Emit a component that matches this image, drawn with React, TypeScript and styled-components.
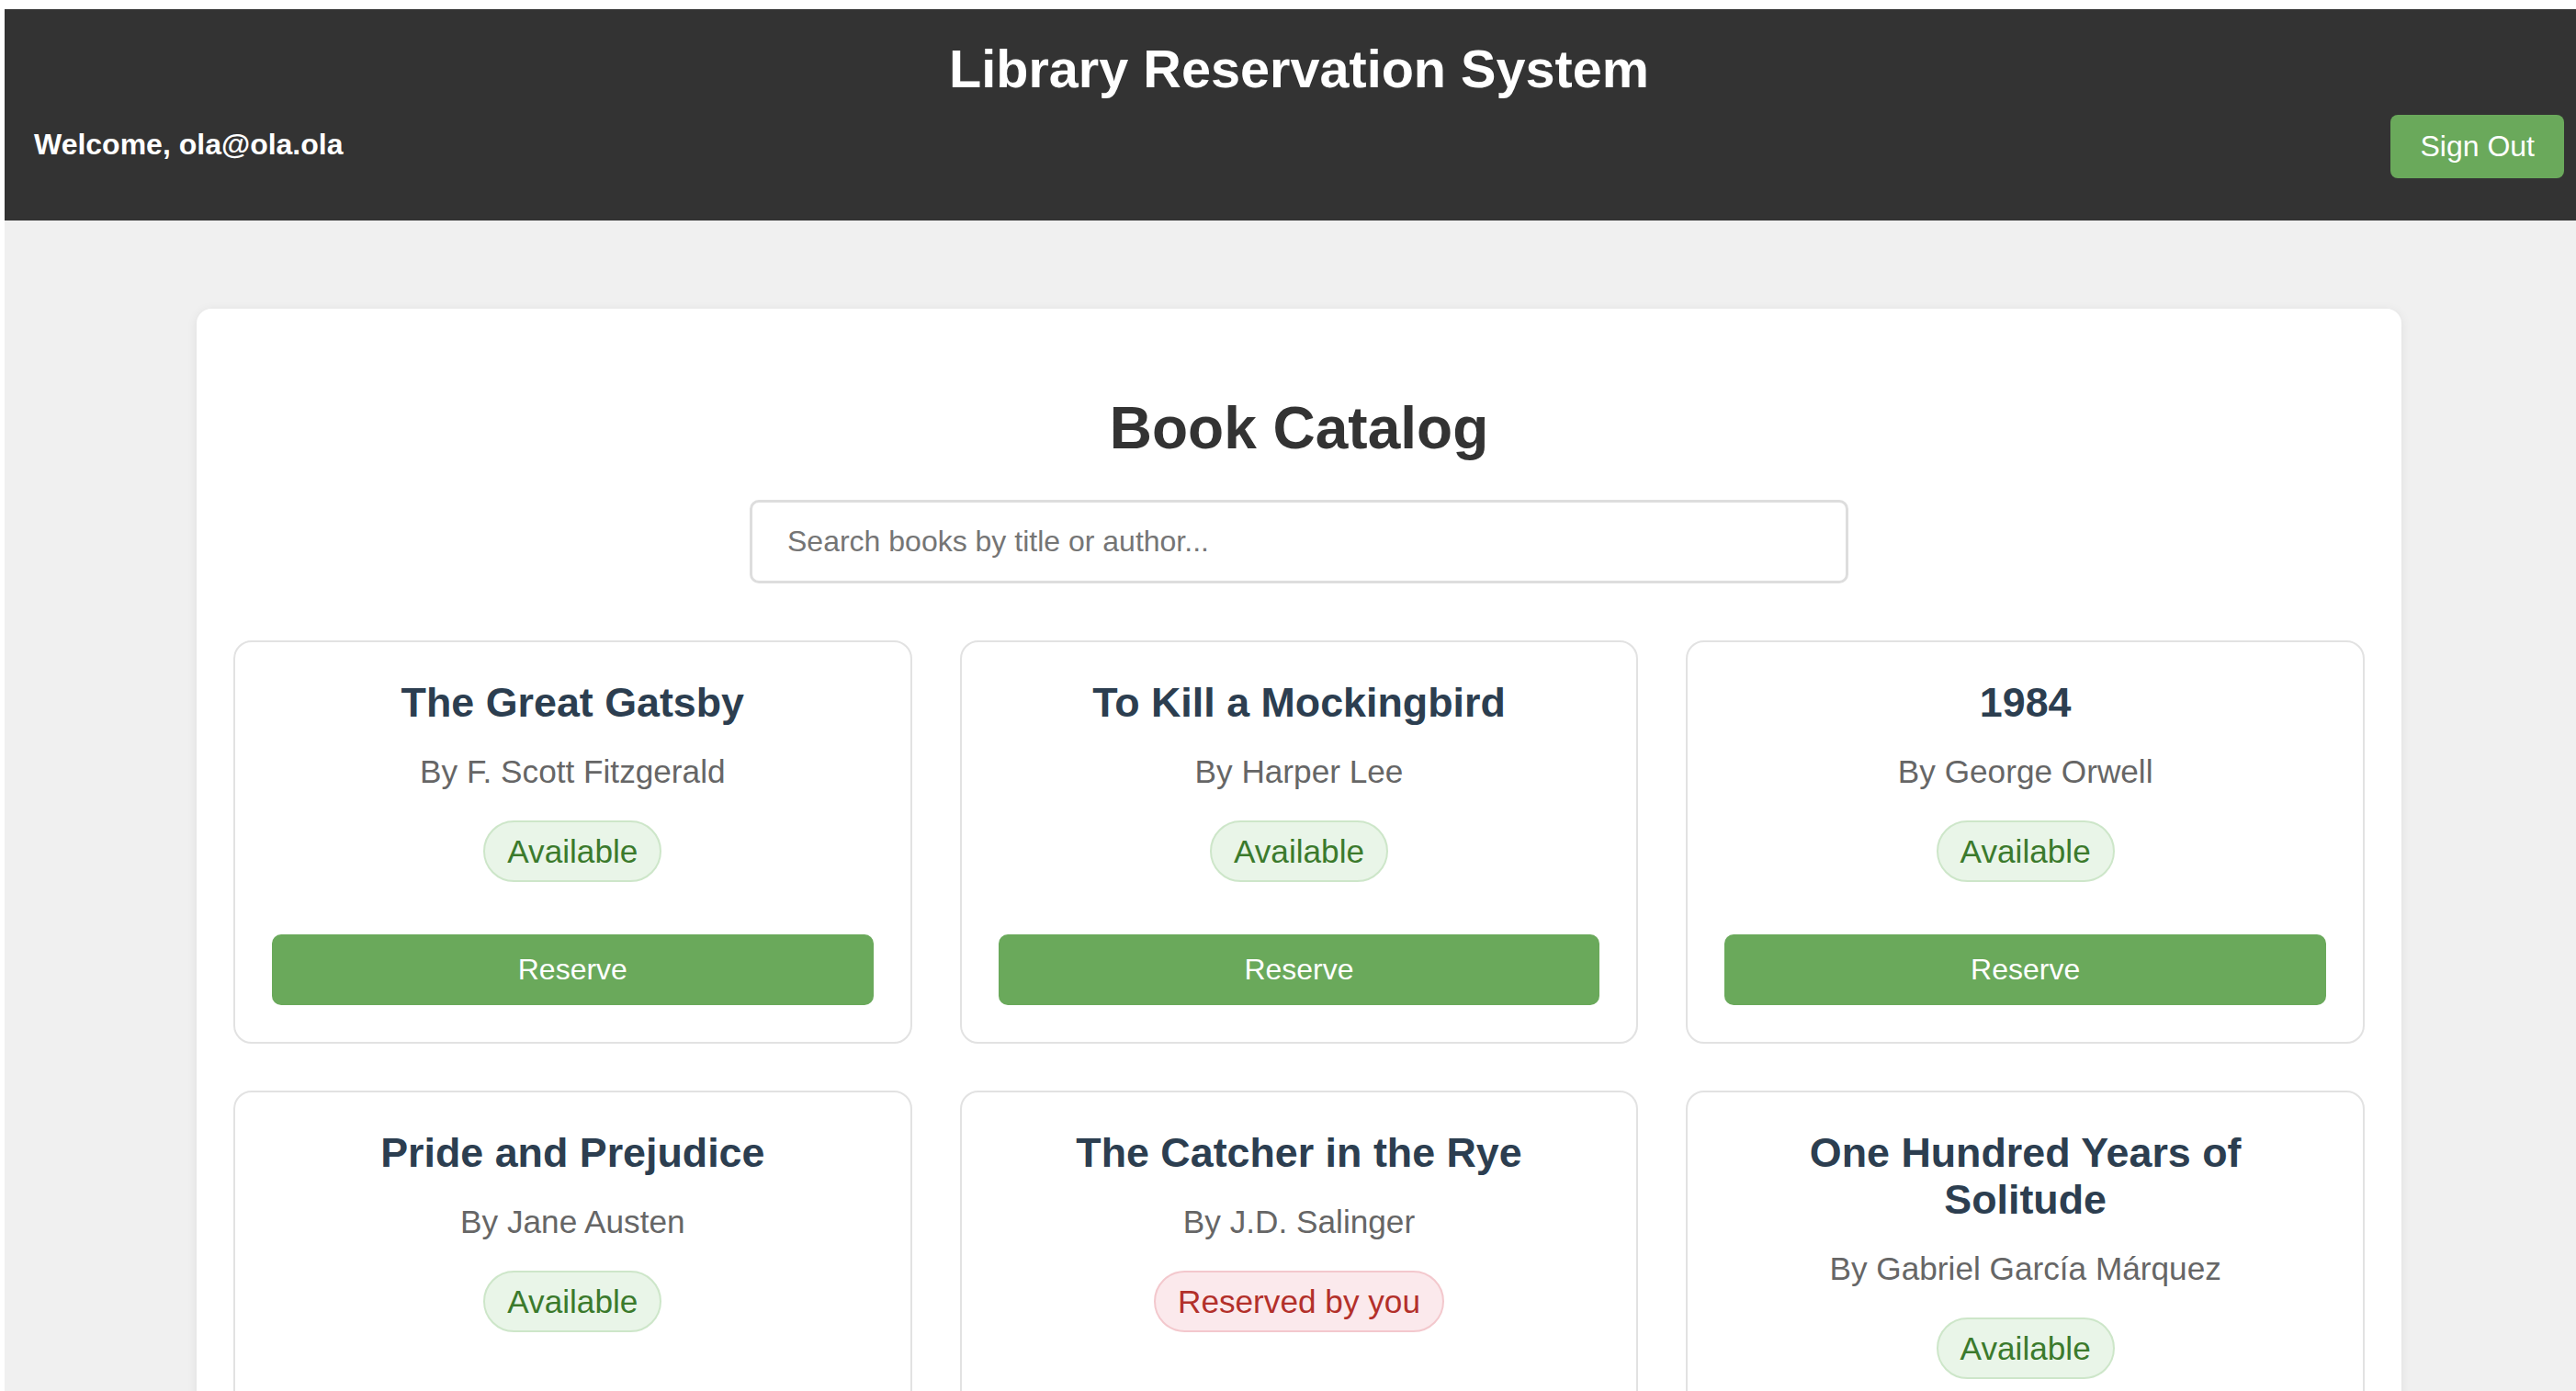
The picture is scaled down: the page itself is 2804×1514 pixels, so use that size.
import React from "react";
import styled, { createGlobalStyle } from "styled-components";

const GlobalStyle = createGlobalStyle`
  html, body {
    overflow: hidden;
  }
  body {
    margin: 10px 0 0 5px;
    background: #ffffff;
    font-family: "Liberation Sans", Arial, sans-serif;
  }
  * { box-sizing: border-box; }
`;

const Page = styled.div`
  width: 2818px;
  min-height: 1600px;
  background: #f0f0f0;
  font-family: "Liberation Sans", Arial, sans-serif;
`;

const Header = styled.header`
  background: #333333;
  color: #ffffff;
  padding: 32px 32px 46px;
`;

const HeaderTitle = styled.h1`
  margin: 0 0 17px;
  font-size: 57.6px;
  font-weight: 700;
  line-height: normal;
  text-align: center;
`;

const UserBar = styled.div`
  display: flex;
  justify-content: space-between;
  align-items: center;
`;

const Welcome = styled.span`
  font-size: 32px;
  font-weight: 700;
  padding-bottom: 4px;
`;

const SignOutButton = styled.button`
  font-family: inherit;
  font-size: 32px;
  line-height: normal;
  padding: 16px 32px;
  background: #6aa95b;
  color: #ffffff;
  border: none;
  border-radius: 8px;
  cursor: pointer;
`;

const Content = styled.main`
  padding-top: 96px;
`;

const MainCard = styled.section`
  width: 2400px;
  margin: 0 auto;
  background: #ffffff;
  border-radius: 16px;
  box-shadow: 0 2px 12px rgba(0, 0, 0, 0.08);
  padding: 40px;
`;

const CatalogHeading = styled.h2`
  margin: 53px 0 41px;
  font-size: 64px;
  font-weight: 700;
  line-height: normal;
  color: #333333;
  text-align: center;
`;

const SearchInput = styled.input`
  display: block;
  width: 1196px;
  margin: 0 auto 62px;
  padding: 24px 38px;
  border: 3px solid #dddddd;
  border-radius: 10px;
  font-family: inherit;
  font-size: 32px;
  color: #333;
  background: #fff;
  outline: none;
  &::placeholder {
    color: #757575;
  }
`;

const BookGrid = styled.div`
  display: grid;
  grid-template-columns: repeat(3, 1fr);
  gap: 51px 52px;
`;

const BookCard = styled.article`
  display: flex;
  flex-direction: column;
  align-items: stretch;
  text-align: center;
  border: 2px solid #e2e2e2;
  border-radius: 20px;
  padding: 40px 40px 40px;
  background: #ffffff;
`;

const BookTitle = styled.h3`
  margin: 0 0 30px;
  font-size: 44.8px;
  font-weight: 700;
  line-height: normal;
  color: #2c3e50;
`;

const BookAuthor = styled.p`
  margin: 0 0 33px;
  font-size: 35.2px;
  line-height: normal;
  color: #666666;
`;

const StatusBadge = styled.span<{ $reserved?: boolean }>`
  align-self: center;
  display: inline-block;
  padding: 11.5px 24px;
  border-radius: 999px;
  font-size: 35.2px;
  line-height: normal;
  margin-bottom: 57px;
  background: ${(p) => (p.$reserved ? "#fbe9ec" : "#e9f5e8")};
  border: 2px solid ${(p) => (p.$reserved ? "#f3c8cd" : "#cde6c9")};
  color: ${(p) => (p.$reserved ? "#b3302a" : "#3b7a2c")};
`;

const ActionButton = styled.button<{ $cancel?: boolean }>`
  width: 100%;
  margin-top: auto;
  padding: 20px;
  font-family: inherit;
  font-size: 32px;
  line-height: normal;
  color: #ffffff;
  background: ${(p) => (p.$cancel ? "#d9534f" : "#6aa95b")};
  border: none;
  border-radius: 10px;
  cursor: pointer;
`;

type Book = {
  title: string;
  author: string;
  reserved?: boolean;
};

const books: Book[] = [
  { title: "The Great Gatsby", author: "F. Scott Fitzgerald" },
  { title: "To Kill a Mockingbird", author: "Harper Lee" },
  { title: "1984", author: "George Orwell" },
  { title: "Pride and Prejudice", author: "Jane Austen" },
  { title: "The Catcher in the Rye", author: "J.D. Salinger", reserved: true },
  { title: "One Hundred Years of Solitude", author: "Gabriel García Márquez" },
];

export default function App() {
  return (
    <>
      <GlobalStyle />
      <Page>
        <Header>
          <HeaderTitle>Library Reservation System</HeaderTitle>
          <UserBar>
            <Welcome>Welcome, ola@ola.ola</Welcome>
            <SignOutButton>Sign Out</SignOutButton>
          </UserBar>
        </Header>
        <Content>
          <MainCard>
            <CatalogHeading>Book Catalog</CatalogHeading>
            <SearchInput placeholder="Search books by title or author..." />
            <BookGrid>
              {books.map((b) => (
                <BookCard key={b.title}>
                  <BookTitle>{b.title}</BookTitle>
                  <BookAuthor>By {b.author}</BookAuthor>
                  <StatusBadge $reserved={b.reserved}>
                    {b.reserved ? "Reserved by you" : "Available"}
                  </StatusBadge>
                  <ActionButton $cancel={b.reserved}>
                    {b.reserved ? "Cancel Reservation" : "Reserve"}
                  </ActionButton>
                </BookCard>
              ))}
            </BookGrid>
          </MainCard>
        </Content>
      </Page>
    </>
  );
}
